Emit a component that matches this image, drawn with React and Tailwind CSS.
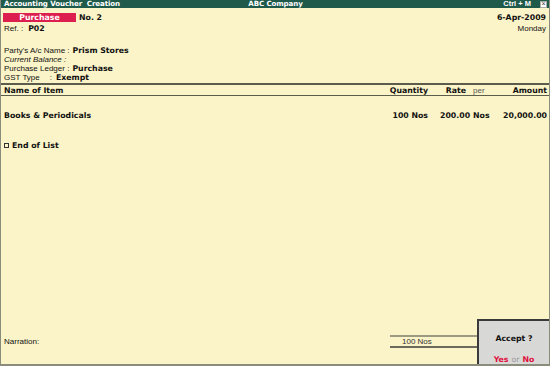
import React from "react";

const bold = "font-bold font-['DejaVu_Sans'] text-[7.8px]";
const titleBold = "font-bold font-['DejaVu_Sans'] text-[7.1px] tracking-[-0.1px]";

function Field({ label, value, italic }) {
  return (
    <div className="flex h-[9px] items-center">
      <span className={italic ? "italic" : ""}>{label}</span>
      {value && <span className={`ml-[3px] ${bold}`}>{value}</span>}
    </div>
  );
}

export default function App() {
  return (
    <div
      className="relative flex h-[366px] w-[550px] flex-col overflow-hidden border-x border-b-2 border-[#8c8c7c] bg-[#fbf4c8] text-[8px] leading-[9px] text-[#111]"
      style={{ fontFamily: '"Liberation Sans", Arial, sans-serif' }}
    >
      {/* Title bar */}
      <div className="flex h-[8px] items-center justify-between bg-[#1f5a4b] pl-[3px] pr-[2px] leading-[8px] text-white">
        <span className={`w-[180px] ${titleBold}`}>Accounting Voucher&nbsp; Creation</span>
        <span className={titleBold}>ABC Company</span>
        <div className="flex w-[180px] items-center justify-end gap-[9px]">
          <span className="text-[7.5px] font-bold">Ctrl + M</span>
          <span className="flex h-[7px] w-[7px] items-center justify-center border border-[#aaa] bg-white text-[7px] leading-[6px] text-[#333]">
            ×
          </span>
        </div>
      </div>

      {/* Voucher head */}
      <div className="mt-[5px] flex justify-between pl-[2px] pr-[3px]">
        <div className="flex flex-col">
          <div className="flex h-[9px] items-center">
            <span className={`flex h-[9px] w-[73px] items-center justify-center bg-[#dc1f4f] text-white ${bold}`}>
              Purchase
            </span>
            <span className={`ml-[3px] ${bold}`}>No. 2</span>
          </div>
          <div className="mt-[2px] flex h-[9px] items-center pl-[1px]">
            <span>Ref. :</span>
            <span className={`ml-[5px] ${bold}`}>P02</span>
          </div>
        </div>
        <div className="flex flex-col items-end">
          <div className={`flex h-[9px] items-center ${bold}`}>6-Apr-2009</div>
          <div className="mt-[2px] flex h-[9px] items-center">Monday</div>
        </div>
      </div>

      {/* Party details */}
      <div className="mt-[13px] flex flex-col pl-[3px]">
        <Field label="Party's A/c Name :" value="Prism Stores" />
        <Field label="Current Balance :" italic />
        <Field label="Purchase Ledger :" value="Purchase" />
        <div className="flex h-[9px] items-center">
          <span>GST Type</span>
          <span className="ml-[10px]">:</span>
          <span className={`ml-[4px] ${bold}`}>Exempt</span>
        </div>
      </div>

      {/* Column header */}
      <div className="mt-[1px] border-t-2 border-[#5c5c4c]" />
      <div className="flex h-[11px] items-center border-b border-[#5c5c4c] pl-[3px] pr-[2px]">
        <span className={`flex-1 ${bold}`}>Name of Item</span>
        <span className={`w-[40px] text-right ${bold}`}>Quantity</span>
        <span className={`ml-[12px] w-[26px] text-right ${bold}`}>Rate</span>
        <span className="ml-[7px] w-[17px] text-[#555]">per</span>
        <span className={`w-[57px] text-right ${bold}`}>Amount</span>
      </div>

      {/* Items */}
      <div className="mt-[15px] flex h-[9px] items-center pl-[3px] pr-[2px]">
        <span className={`flex-1 ${bold}`}>Books &amp; Periodicals</span>
        <span className={`w-[40px] text-right ${bold}`}>100 Nos</span>
        <span className={`ml-[12px] w-[30px] text-right ${bold}`}>200.00</span>
        <span className={`ml-[3px] w-[17px] ${bold}`}>Nos</span>
        <span className={`w-[57px] text-right ${bold}`}>20,000.00</span>
      </div>

      <div className="mt-[21px] flex h-[9px] items-center gap-[3px] px-[3px]">
        <span className="h-[5px] w-[5px] border border-[#333]" />
        <span className={bold}>End of List</span>
      </div>

      <div className="flex-1" />

      {/* Footer */}
      <div className="mb-[16px] flex items-center">
        <span className="pl-[3px]">Narration:</span>
        <div className="ml-auto mr-[71px] flex w-[88px] flex-col">
          <div className="h-[2px] border-y border-[#9c9a80]" />
          <div className="flex h-[9px] items-center pl-[12px] text-[#333]">100 Nos</div>
          <div className="h-[2px] border-y border-[#6c6a5c]" />
        </div>
      </div>

      {/* Accept dialog */}
      <div className="absolute bottom-0 right-0 flex h-[45px] w-[72px] flex-col items-center border-2 border-b-0 border-r-0 border-[#3a3a3a] bg-[#d8d8d6]">
        <span className={`mt-[13px] ${bold}`}>Accept ?</span>
        <div className={`mt-auto mb-0 flex items-center gap-[3px] ${bold}`}>
          <span className="text-[#e0103c]">Yes</span>
          <span className="font-normal text-[#999]">or</span>
          <span className="text-[#e0103c]">No</span>
        </div>
      </div>
    </div>
  );
}
